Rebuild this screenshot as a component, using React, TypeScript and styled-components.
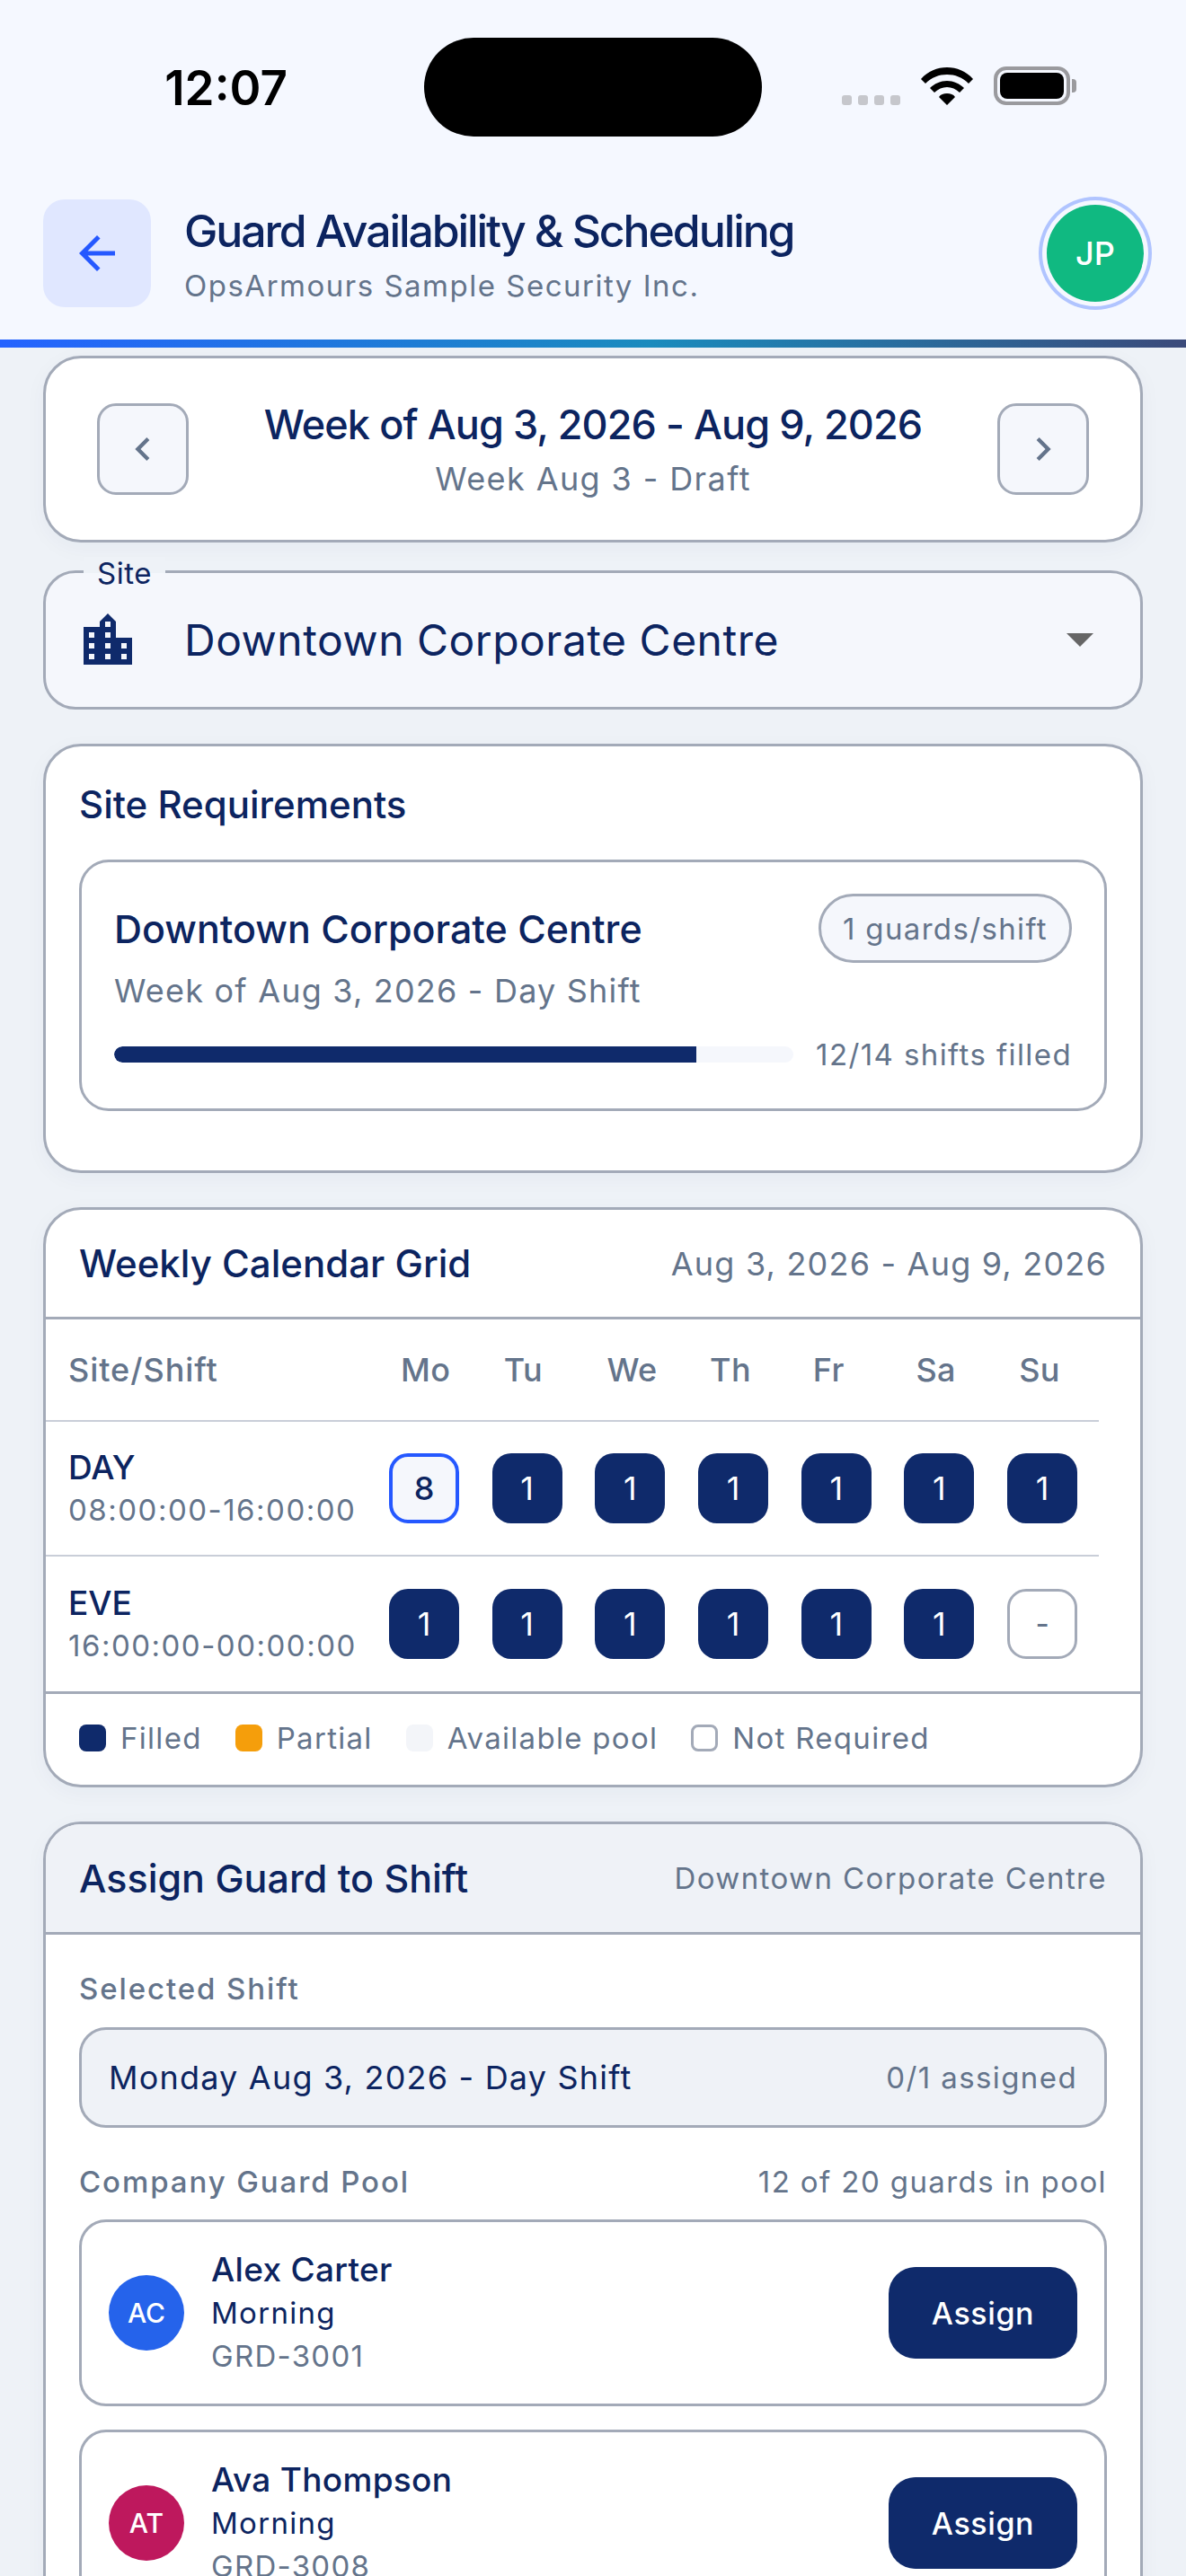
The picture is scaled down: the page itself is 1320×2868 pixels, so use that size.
import React from 'react';
import styled, { createGlobalStyle } from 'styled-components';
import { MdArrowBack, MdChevronLeft, MdChevronRight, MdLocationCity } from 'react-icons/md';

const NAVY = '#0f2a6b';
const INK = '#0c2460';
const SLATE = '#64748b';
const LINE = '#a3aab8';

const GlobalStyle = createGlobalStyle`
  html, body {
    margin: 0;
    padding: 0;
    background: #eef2f7;
  }
  * {
    box-sizing: border-box;
  }
`;

const Page = styled.div`
  width: 1320px;
  height: 2868px;
  overflow: hidden;
  background: #eef2f7;
  font-family: Inter, 'Liberation Sans', sans-serif;
  color: ${INK};
`;

const Header = styled.header`
  height: 387px;
  background: #f5f8ff;
  border-bottom: 9px solid transparent;
  border-image: linear-gradient(90deg, #2563ff 0%, #1a8bbd 55%, #3b4a7a 100%) 1;
`;

const StatusBar = styled.div`
  height: 222px;
  display: grid;
  grid-template-columns: 472px 376px 1fr;
  padding-top: 42px;
  align-items: start;
`;

const Clock = styled.div`
  font-size: 53px;
  font-weight: 600;
  color: #000;
  text-align: right;
  padding: 28px 152px 0 0;
  line-height: 56px;
`;

const Island = styled.div`
  height: 110px;
  border-radius: 55px;
  background: #000;
`;

const StatusIcons = styled.div`
  display: flex;
  align-items: flex-end;
  height: 75px;
  padding: 0 0 0 89px;
`;

const Dots = styled.div`
  display: flex;
  gap: 7px;
  margin-right: 23px;
`;

const Dot = styled.span`
  width: 11px;
  height: 11px;
  border-radius: 3px;
  background: #c6c7cc;
`;

const Battery = styled.div`
  width: 85px;
  height: 43px;
  margin-left: 23px;
  border: 4px solid #9a9a9e;
  border-radius: 14px;
  padding: 3px;
  position: relative;
`;

const BatteryFill = styled.div`
  height: 100%;
  background: #000;
  border-radius: 8px;
`;

const BatteryCap = styled.span`
  position: absolute;
  right: -11px;
  top: 10px;
  width: 5px;
  height: 15px;
  border-radius: 0 4px 4px 0;
  background: #9a9a9e;
`;

const TitleRow = styled.div`
  display: flex;
  align-items: center;
  padding: 0 47px 0 48px;
  height: 120px;
`;

const BackButton = styled.button`
  width: 120px;
  height: 120px;
  border: 0;
  border-radius: 24px;
  background: #e0e7ff;
  color: #2558ff;
  display: flex;
  align-items: center;
  justify-content: center;
  padding: 0;
`;

const TitleBlock = styled.div`
  flex: 1;
  margin-left: 37px;
`;

const Title = styled.div`
  font-size: 50px;
  font-weight: 500;
  letter-spacing: -2.1px;
  line-height: 60px;
  margin-top: 2px;
`;

const Subtitle = styled.div`
  font-size: 33px;
  color: ${SLATE};
  letter-spacing: 1.5px;
  line-height: 42px;
  margin-top: 10px;
`;

const Avatar = styled.div`
  width: 108px;
  height: 108px;
  border-radius: 50%;
  background: #10b981;
  color: #fff;
  font-size: 36px;
  font-weight: 500;
  display: flex;
  align-items: center;
  justify-content: center;
  box-shadow: 0 0 0 5px #f5f8ff, 0 0 0 9px #b0c4ff;
`;

const Content = styled.main`
  padding: 9px 48px 0;
  display: flex;
  flex-direction: column;
`;

const Card = styled.section<{ $gap?: number }>`
  background: #fff;
  border: 3px solid ${LINE};
  border-radius: 42px;
  margin-bottom: ${p => p.$gap ?? 36}px;
  box-shadow: 0 6px 24px rgba(15, 42, 107, 0.04);
`;

const WeekCard = styled(Card)`
  height: 208px;
  display: flex;
  align-items: center;
  justify-content: space-between;
  padding: 0 57px;
`;

const WeekButton = styled.button`
  width: 102px;
  height: 102px;
  border: 3px solid ${LINE};
  border-radius: 21px;
  background: #f5f7fc;
  color: ${SLATE};
  padding: 0;
  display: flex;
  align-items: center;
  justify-content: center;
`;

const WeekText = styled.div`
  text-align: center;
`;

const WeekTitle = styled.div`
  font-size: 45px;
  font-weight: 500;
  letter-spacing: -0.9px;
  line-height: 60px;
`;

const WeekSub = styled.div`
  font-size: 36px;
  color: ${SLATE};
  letter-spacing: 1.4px;
  line-height: 48px;
  margin-top: 6px;
`;

const SiteField = styled.div`
  position: relative;
  height: 155px;
  margin-bottom: 38px;
  background: #f5f7fc;
  border: 3px solid ${LINE};
  border-radius: 36px;
  display: flex;
  align-items: center;
  padding: 0 52px 0 33px;
`;

const SiteLegend = styled.span`
  position: absolute;
  left: 42px;
  top: -18px;
  padding: 0 15px;
  background: linear-gradient(#eef2f7 50%, #f5f7fc 50%);
  font-size: 33px;
  line-height: 36px;
  letter-spacing: 0.5px;
`;

const SiteValue = styled.div`
  flex: 1;
  margin-left: 49px;
  font-size: 48px;
  letter-spacing: 0.5px;
`;

const Caret = styled.span`
  width: 0;
  height: 0;
  border-left: 15px solid transparent;
  border-right: 15px solid transparent;
  border-top: 15px solid #666;
`;

const RequirementsCard = styled(Card)`
  height: 478px;
  padding: 38px 37px;
`;

const SectionTitle = styled.h2<{ $size?: number }>`
  margin: 0;
  font-size: ${p => p.$size ?? 42}px;
  font-weight: 500;
  line-height: 54px;
`;

const InnerCard = styled.div`
  margin-top: 34px;
  height: 280px;
  border: 3px solid ${LINE};
  border-radius: 33px;
  padding: 35px 36px;
`;

const InnerTop = styled.div`
  display: flex;
  align-items: center;
  justify-content: space-between;
`;

const InnerTitle = styled.div`
  font-size: 43px;
  font-weight: 500;
`;

const Pill = styled.span`
  height: 77px;
  border: 3px solid ${LINE};
  border-radius: 39px;
  padding: 0 24px;
  display: flex;
  align-items: center;
  background: #f5f7fc;
  font-size: 33px;
  color: ${SLATE};
  letter-spacing: 1.35px;
`;

const InnerSub = styled.div`
  font-size: 36px;
  color: ${SLATE};
  letter-spacing: 1.2px;
  margin-top: 9px;
`;

const ProgressRow = styled.div`
  display: flex;
  align-items: center;
  gap: 25px;
  margin-top: 29px;
`;

const Track = styled.div`
  flex: 1;
  height: 18px;
  border-radius: 9px;
  background: #f5f7fc;
  overflow: hidden;
`;

const Fill = styled.div`
  height: 100%;
  background: ${NAVY};
  border-radius: 9px 0 0 9px;
`;

const ProgressLabel = styled.span`
  font-size: 33px;
  color: ${SLATE};
  letter-spacing: 1.4px;
`;

const CardHeader = styled.div<{ $tinted?: boolean; $height: number }>`
  height: ${p => p.$height}px;
  padding: 0 37px;
  display: flex;
  align-items: center;
  justify-content: space-between;
  border-bottom: 3px solid ${LINE};
  background: ${p => (p.$tinted ? '#eff2f7' : 'transparent')};
  border-radius: 39px 39px 0 0;
`;

const HeaderNote = styled.span<{ $large?: boolean }>`
  font-size: ${p => (p.$large ? 36 : 33)}px;
  color: ${SLATE};
  letter-spacing: ${p => (p.$large ? 1.2 : 1.4)}px;
`;

const GridRow = styled.div<{ $height: number }>`
  width: 1172px;
  height: ${p => p.$height}px;
  display: grid;
  grid-template-columns: 369px repeat(7, 114.7px);
  align-items: center;
  border-bottom: 2px solid #c9ced8;
`;

const LastGridRow = styled(GridRow)`
  border-bottom: 0;
`;

const ColumnHead = styled.div<{ $first?: boolean }>`
  padding-left: ${p => (p.$first ? 25 : 26)}px;
  font-size: 36px;
  font-weight: 500;
  letter-spacing: ${p => (p.$first ? 0.95 : 0.4)}px;
  color: ${SLATE};
`;

const ShiftLabel = styled.div`
  padding-left: 25px;
`;

const ShiftName = styled.div`
  font-size: 37px;
  font-weight: 500;
  line-height: 48px;
`;

const ShiftTime = styled.div`
  font-size: 33px;
  color: ${SLATE};
  letter-spacing: 1.5px;
  line-height: 46px;
`;

const DayCell = styled.div`
  padding-left: 13px;
`;

const DayBadge = styled.div<{ $kind: 'filled' | 'selected' | 'empty' }>`
  width: 78px;
  height: 78px;
  border-radius: 21px;
  display: flex;
  align-items: center;
  justify-content: center;
  font-size: ${p => (p.$kind === 'empty' ? 33 : 36)}px;
  font-weight: ${p => (p.$kind === 'filled' ? 400 : 500)};
  background: ${p => (p.$kind === 'filled' ? NAVY : p.$kind === 'selected' ? '#f5f7fc' : '#fff')};
  color: ${p => (p.$kind === 'filled' ? '#fff' : p.$kind === 'selected' ? INK : SLATE)};
  border: ${p =>
    p.$kind === 'selected' ? '4px solid #2558ff' : p.$kind === 'empty' ? `3px solid ${LINE}` : '0'};
`;

const Legend = styled.div`
  height: 104px;
  border-top: 3px solid ${LINE};
  padding: 0 37px 4px;
  display: flex;
  align-items: center;
  gap: 37px;
`;

const LegendItem = styled.div`
  display: flex;
  align-items: center;
  gap: 16px;
  font-size: 33px;
  color: ${SLATE};
  letter-spacing: 1.3px;
`;

const Swatch = styled.span<{ $color: string; $outlined?: boolean }>`
  width: 30px;
  height: 30px;
  border-radius: 8px;
  background: ${p => p.$color};
  border: ${p => (p.$outlined ? `3px solid ${LINE}` : '0')};
`;

const AssignBody = styled.div`
  padding: 39px 37px 0;
`;

const FieldLabel = styled.div`
  font-size: 33px;
  font-weight: 500;
  color: ${SLATE};
  letter-spacing: 1.9px;
  line-height: 42px;
`;

const SelectedBox = styled.div`
  height: 112px;
  margin: 22px 0 39px;
  border: 3px solid ${LINE};
  border-radius: 30px;
  background: #eff2f7;
  padding: 0 30px;
  display: flex;
  align-items: center;
  justify-content: space-between;
`;

const SelectedText = styled.span`
  font-size: 36px;
  letter-spacing: 1.2px;
`;

const PoolHead = styled.div`
  display: flex;
  align-items: center;
  justify-content: space-between;
  margin-bottom: 21px;
`;

const GuardRow = styled.div`
  height: 208px;
  margin-bottom: 26px;
  border: 3px solid ${LINE};
  border-radius: 30px;
  padding: 0 30px;
  display: flex;
  align-items: center;
`;

const GuardAvatar = styled.div<{ $color: string }>`
  width: 84px;
  height: 84px;
  border-radius: 50%;
  background: ${p => p.$color};
  color: #fff;
  font-size: 30px;
  font-weight: 500;
  display: flex;
  align-items: center;
  justify-content: center;
`;

const GuardInfo = styled.div`
  flex: 1;
  margin-left: 30px;
`;

const GuardName = styled.div`
  font-size: 37px;
  font-weight: 500;
  line-height: 48px;
  letter-spacing: 0.3px;
`;

const GuardMeta = styled.div<{ $muted?: boolean }>`
  font-size: 33px;
  line-height: 48px;
  letter-spacing: 1.3px;
  color: ${p => (p.$muted ? SLATE : INK)};
`;

const AssignButton = styled.button`
  width: 210px;
  height: 102px;
  border: 0;
  border-radius: 30px;
  background: ${NAVY};
  color: #fff;
  font-family: inherit;
  font-size: 34px;
  font-weight: 500;
  letter-spacing: 0.6px;
`;

const DAYS = ['Mo', 'Tu', 'We', 'Th', 'Fr', 'Sa', 'Su'];

const GUARDS = [
  { initials: 'AC', name: 'Alex Carter', shift: 'Morning', id: 'GRD-3001', color: '#2563eb' },
  { initials: 'AT', name: 'Ava Thompson', shift: 'Morning', id: 'GRD-3008', color: '#be185d' },
];

const SHIFTS = [
  { name: 'DAY', time: '08:00:00-16:00:00', cells: ['8', '1', '1', '1', '1', '1', '1'] },
  { name: 'EVE', time: '16:00:00-00:00:00', cells: ['1', '1', '1', '1', '1', '1', '-'] },
];

const badgeKind = (value: string) => {
  if (value === '8') return 'selected';
  if (value === '-') return 'empty';
  return 'filled';
};

const App: React.FC = () => (
  <Page>
    <GlobalStyle />
    <Header>
      <StatusBar>
        <Clock>12:07</Clock>
        <Island />
        <StatusIcons>
          <Dots>
            {[0, 1, 2, 3].map(i => (
              <Dot key={i} />
            ))}
          </Dots>
          <svg width="58" height="42" viewBox="0 0 58 42">
            <path
              d="M0 13C8 4 18 0 29 0s21 4 29 13l-5 5C46 11 38 8 29 8s-17 3-24 10z M10 23c5-5 12-8 19-8s14 3 19 8l-5 5c-4-4-9-6-14-6s-10 2-14 6z M20 33c2-3 5-4 9-4s7 1 9 4L29 42z"
              fill="#000"
            />
          </svg>
          <Battery>
            <BatteryFill />
            <BatteryCap />
          </Battery>
        </StatusIcons>
      </StatusBar>
      <TitleRow>
        <BackButton>
          <MdArrowBack size={60} />
        </BackButton>
        <TitleBlock>
          <Title>Guard Availability &amp; Scheduling</Title>
          <Subtitle>OpsArmours Sample Security Inc.</Subtitle>
        </TitleBlock>
        <Avatar>JP</Avatar>
      </TitleRow>
    </Header>
    <Content>
      <WeekCard $gap={31}>
        <WeekButton>
          <MdChevronLeft size={52} />
        </WeekButton>
        <WeekText>
          <WeekTitle>Week of Aug 3, 2026 - Aug 9, 2026</WeekTitle>
          <WeekSub>Week Aug 3 - Draft</WeekSub>
        </WeekText>
        <WeekButton>
          <MdChevronRight size={52} />
        </WeekButton>
      </WeekCard>
      <SiteField>
        <SiteLegend>Site</SiteLegend>
        <MdLocationCity size={72} color={NAVY} />
        <SiteValue>Downtown Corporate Centre</SiteValue>
        <Caret />
      </SiteField>
      <RequirementsCard $gap={38}>
        <SectionTitle>Site Requirements</SectionTitle>
        <InnerCard>
          <InnerTop>
            <InnerTitle>Downtown Corporate Centre</InnerTitle>
            <Pill>1 guards/shift</Pill>
          </InnerTop>
          <InnerSub>Week of Aug 3, 2026 - Day Shift</InnerSub>
          <ProgressRow>
            <Track>
              <Fill style={{ width: `${(12 / 14) * 100}%` }} />
            </Track>
            <ProgressLabel>12/14 shifts filled</ProgressLabel>
          </ProgressRow>
        </InnerCard>
      </RequirementsCard>
      <Card $gap={38}>
        <CardHeader $height={122}>
          <SectionTitle>Weekly Calendar Grid</SectionTitle>
          <HeaderNote $large>Aug 3, 2026 - Aug 9, 2026</HeaderNote>
        </CardHeader>
        <GridRow $height={114}>
          <ColumnHead $first>Site/Shift</ColumnHead>
          {DAYS.map(day => (
            <ColumnHead key={day}>{day}</ColumnHead>
          ))}
        </GridRow>
        {SHIFTS.map((shift, index) => {
          const Row = index === SHIFTS.length - 1 ? LastGridRow : GridRow;
          return (
            <Row key={shift.name} $height={150}>
              <ShiftLabel>
                <ShiftName>{shift.name}</ShiftName>
                <ShiftTime>{shift.time}</ShiftTime>
              </ShiftLabel>
              {shift.cells.map((value, i) => (
                <DayCell key={i}>
                  <DayBadge $kind={badgeKind(value)}>{value}</DayBadge>
                </DayCell>
              ))}
            </Row>
          );
        })}
        <Legend>
          <LegendItem>
            <Swatch $color={NAVY} />
            Filled
          </LegendItem>
          <LegendItem>
            <Swatch $color="#f59e0b" />
            Partial
          </LegendItem>
          <LegendItem>
            <Swatch $color="#f3f5f9" />
            Available pool
          </LegendItem>
          <LegendItem>
            <Swatch $color="#fff" $outlined />
            Not Required
          </LegendItem>
        </Legend>
      </Card>
      <Card>
        <CardHeader $height={123} $tinted>
          <SectionTitle $size={43}>Assign Guard to Shift</SectionTitle>
          <HeaderNote>Downtown Corporate Centre</HeaderNote>
        </CardHeader>
        <AssignBody>
          <FieldLabel>Selected Shift</FieldLabel>
          <SelectedBox>
            <SelectedText>Monday Aug 3, 2026 - Day Shift</SelectedText>
            <HeaderNote>0/1 assigned</HeaderNote>
          </SelectedBox>
          <PoolHead>
            <FieldLabel>Company Guard Pool</FieldLabel>
            <HeaderNote>12 of 20 guards in pool</HeaderNote>
          </PoolHead>
          {GUARDS.map(guard => (
            <GuardRow key={guard.id}>
              <GuardAvatar $color={guard.color}>{guard.initials}</GuardAvatar>
              <GuardInfo>
                <GuardName>{guard.name}</GuardName>
                <GuardMeta>{guard.shift}</GuardMeta>
                <GuardMeta $muted>{guard.id}</GuardMeta>
              </GuardInfo>
              <AssignButton>Assign</AssignButton>
            </GuardRow>
          ))}
        </AssignBody>
      </Card>
    </Content>
  </Page>
);

export default App;
